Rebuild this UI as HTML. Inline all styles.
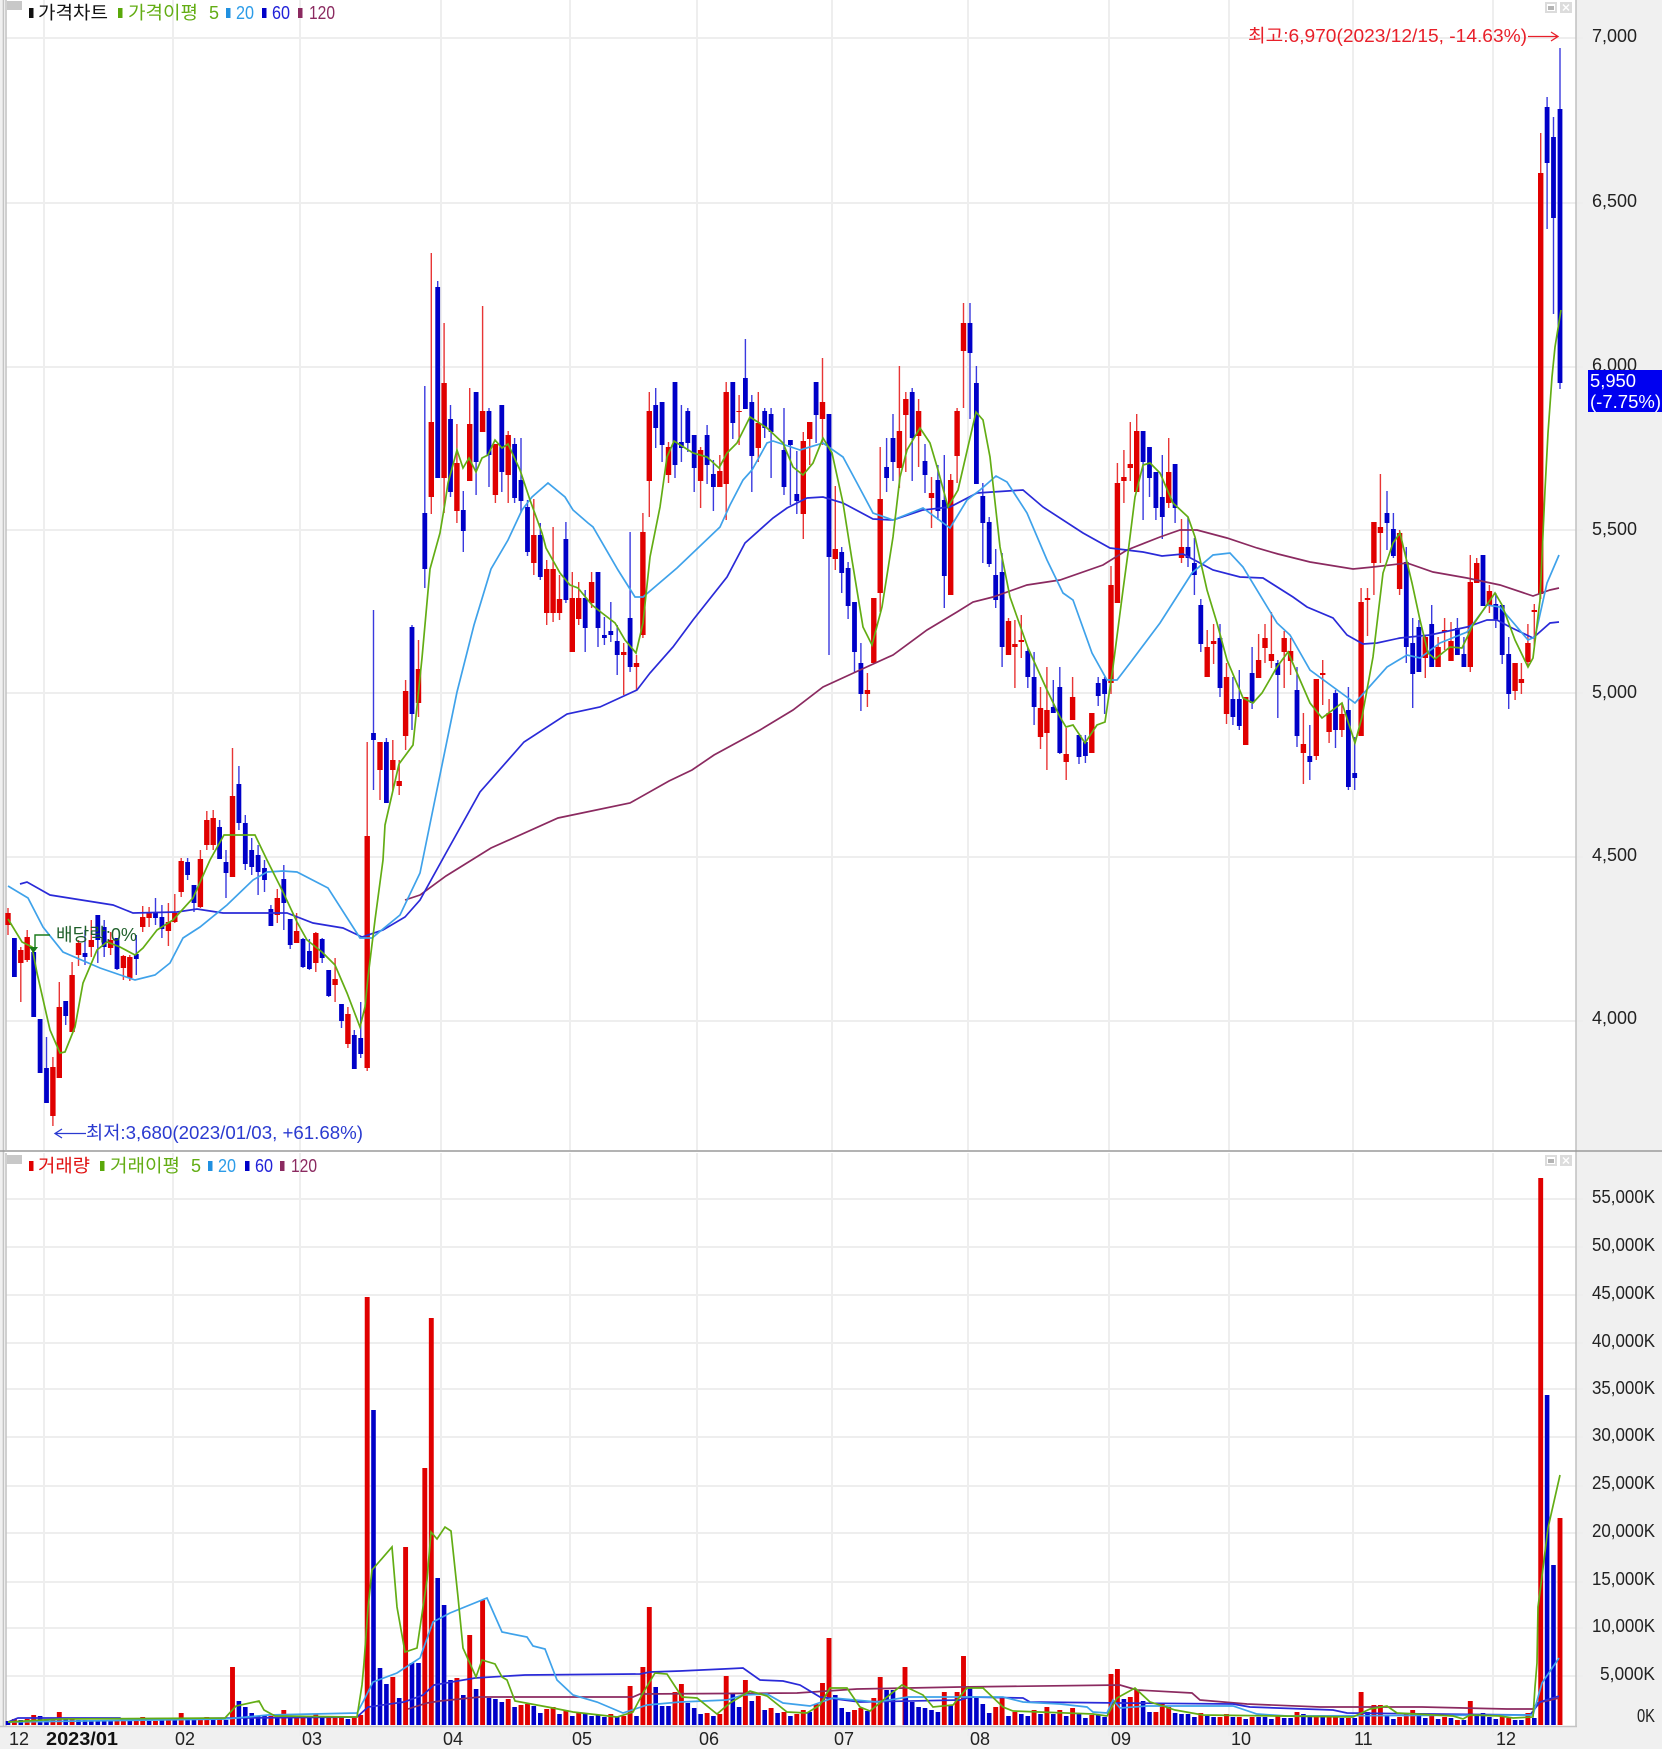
<!DOCTYPE html>
<html lang="ko">
<head>
<meta charset="utf-8">
<title>가격차트</title>
<style>
html,body{margin:0;padding:0;background:#fff;width:1662px;height:1749px;overflow:hidden}
svg{display:block}
text{font-family:"Liberation Sans","Noto Sans CJK KR",sans-serif;font-size:18px}
.ax{fill:#222}
</style>
</head>
<body>
<svg width="1662" height="1749" viewBox="0 0 1662 1749" xmlns="http://www.w3.org/2000/svg">
<rect width="1662" height="1749" fill="#fff"/>
<rect x="1576" y="0" width="86" height="1749" fill="#f0f0f0"/>
<rect x="0" y="1727" width="1662" height="22" fill="#f0f0f0"/>
<rect x="0" y="0" width="3" height="1749" fill="#f0f0f0"/>

<!-- grid -->
<path fill="none" stroke="#eeeeee" stroke-width="2" d="M6 38H1583M6 203H1583M6 367H1583M6 530H1583M6 693H1583M6 857H1583M6 1021H1583M6 1199H1583M6 1247H1583M6 1295H1583M6 1343H1583M6 1389H1583M6 1437H1583M6 1486H1583M6 1533H1583M6 1582H1583M6 1628H1583M6 1676H1583"/>
<path fill="none" stroke="#eeeeee" stroke-width="2" d="M44 0V1150M173 0V1150M300 0V1150M441 0V1150M570 0V1150M697 0V1150M832 0V1150M968 0V1150M1109 0V1150M1229 0V1150M1353 0V1150M1493 0V1150M44 1153V1736M173 1153V1736M300 1153V1736M441 1153V1736M570 1153V1736M697 1153V1736M832 1153V1736M968 1153V1736M1109 1153V1736M1229 1153V1736M1353 1153V1736M1493 1153V1736"/>
<path fill="none" stroke="#c4c4c4" stroke-width="1.6" d="M1576 0V1727M3.5 0V1727M6 0V1150M6 1153V1727M0 1726.5H1577"/>
<path fill="none" stroke="#9a9a9a" stroke-width="1.6" d="M0 1151H1662"/>

<!-- price candles: wicks -->
<path fill="none" stroke="#e83535" stroke-width="1.4" d="M8 908V935M20.8 947V1002M27.2 930V962M52.9 1057V1126M59.3 982V1078M72.1 962V1032M78.5 940V966M91.3 920V957M110.6 932V955M123.4 955V980M129.8 955V981M142.7 906V932M149.1 907V927M168.4 903V946M174.8 894V923M181.2 858V897M200.4 850V908M206.8 811V850M213.2 810V850M232.5 748V877M277.3 889V923M296.6 913V943M315.8 932V972M335.1 958V1002M347.9 1007V1048M367.2 742V1071M380 742V800M392.8 740V790M399.2 760V795M405.6 680V750M418.5 640V717M431.3 253V514M444.1 323V513M456.9 424V523M469.7 388V481M482.6 306V432M495.4 444V503M508.2 431V503M533.8 499V575M546.7 560V625M553.1 527V622M559.5 575V620M572.3 572V652M578.7 582V625M591.6 572V608M623.7 643V695M636.5 655V690M642.9 513V638M649.3 392V517M668.5 442V483M700.6 447V508M719.8 455V487M726.2 382V520M739.1 395V445M758.3 392V462M803.3 432V539M809.7 422V465M822.5 358V445M835.3 486V570M867.4 673V707M873.8 598V663M880.2 447V612M899.4 366V488M905.8 392V472M918.6 399V467M931.5 477V528M950.7 474V595M957.1 408V483M963.5 303V408M1008.5 618V655M1014.9 620V688M1021.3 615V658M1040.5 687V749M1046.9 667V770M1066.2 728V780M1072.6 677V720M1091.8 713V753M1111 566V694M1117.4 463V603M1123.9 450V503M1130.3 422V481M1136.7 414V492M1168.7 438V508M1181.5 519V563M1207.2 630V677M1213.6 624V664M1226.5 663V724M1245.7 697V745M1258.6 634V678M1265 624V663M1271.4 612V668M1284.2 631V688M1290.6 638V675M1303.4 713V784M1316.3 679V760M1322.7 660V705M1329.1 699V743M1341.9 703V737M1361.1 588V736M1367.5 588V636M1373.9 522V595M1380.4 474V563M1399.6 530V595M1425.3 635V678M1438.1 637V667M1444.6 618V650M1451 622V661M1470.3 555V672M1476.7 558V583M1489.4 585V613M1515.1 663V700M1521.4 663V694M1527.9 624V667M1534.3 604V648M1540.7 133V599"/>
<path fill="none" stroke="#3a3adf" stroke-width="1.4" d="M14.4 938V977M33.7 952V1017M40.1 1019V1073M46.5 1037V1103M65.7 1001V1025M85 930V965M97.8 915V963M104.2 920V957M117 938V970M136.3 935V975M155.5 898V925M161.9 905V938M187.6 858V880M194 885V912M219.6 820V859M226 850V898M238.9 766V830M245.3 815V870M251.7 838V875M258.1 845V895M264.5 860V892M270.9 905V926M283.8 865V930M290.2 919V949M303 938V968M309.4 939V970M322.2 938V963M328.7 970V997M341.5 1004V1028M354.3 1030V1069M360.7 1002V1058M373.5 610V790M386.4 738V803M412 625V730M424.8 386V588M437.7 281V478M450.5 405V497M463.3 491V552M476.1 392V495M489 408V487M501.8 405V492M514.6 438V503M521 438V512M527.5 500V556M540.3 523V580M565.9 522V603M585.2 590V652M598 572V647M604.4 617V645M610.8 602V642M617.2 625V675M630.1 532V672M655.7 388V448M662.1 402V462M675 382V478M681.4 405V462M687.8 408V452M694.2 435V492M707.1 425V484M713.4 460V511M732.8 382V439M745.4 339V409M751.8 395V492M764.7 408V438M771.1 408V478M784 408V495M790.4 440V505M796.8 451V514M816.1 382V443M829 414V655M841.7 547V593M848.1 562V619M854.5 602V672M860.9 643V711M886.6 438V492M893 414V481M912.2 388V481M925 444V493M937.9 465V520M944.3 455V608M970 303V419M976.4 366V484M982.8 483V563M989.2 517V567M995.7 549V608M1002.1 553V667M1027.8 648V688M1034.1 652V725M1053.3 680V713M1059.8 667V754M1079 735V764M1085.4 735V763M1098.2 677V706M1104.6 677V714M1143.1 431V520M1149.5 447V497M1155.9 472V520M1162.3 455V539M1175.1 464V523M1188 517V567M1194.4 538V595M1200.8 599V652M1220 624V697M1232.9 677V725M1239.3 670V730M1252.1 647V709M1277.8 660V718M1297 667V747M1309.8 725V780M1335.5 690V748M1348.4 687V790M1354.7 737V790M1387 491V550M1393.4 513V558M1406.3 547V663M1412.7 618V708M1418.9 620V672M1431.7 605V667M1457.4 618V655M1463.9 637V667M1483 555V606M1495.8 593V628M1502.2 605V664M1508.7 637V709M1547.1 97V229M1553.5 117V314M1560 48V389"/>
<!-- price candles: bodies -->
<path fill="none" stroke="#e00000" stroke-width="5.4" d="M8 913V925M20.8 950V963M27.2 937V960M52.9 1067V1116M59.3 1007V1078M72.1 975V1032M78.5 943V955M91.3 940V947M110.6 940V948M123.4 956V968M129.8 957V978M142.7 917V927M149.1 913V918M168.4 922V931M174.8 913V922M181.2 861V892M200.4 859V907M206.8 820V845M213.2 818V845M232.5 796V877M277.3 898V915M296.6 931V943M315.8 933V963M335.1 979V985M347.9 1014V1044M367.2 836V1068M380 742V770M392.8 760V770M399.2 781V786M405.6 691V736M418.5 669V703M431.3 422V497M444.1 383V478M456.9 463V511M469.7 424V481M482.6 411V432M495.4 444V495M508.2 435V475M533.8 535V563M546.7 569V613M553.1 569V613M559.5 599V613M572.3 598V652M578.7 598V619M591.6 582V603M623.7 652V655M636.5 663V667M642.9 532V635M649.3 411V481M668.5 447V475M700.6 450V481M719.8 471V487M726.2 392V484M739.1 411V412M758.3 423V448M803.3 441V514M809.7 422V439M822.5 402V419M835.3 549V559M867.4 690V694M873.8 598V663M880.2 499V593M899.4 431V468M905.8 399V415M918.6 411V436M931.5 493V498M950.7 480V595M957.1 411V456M963.5 323V351M1008.5 621V655M1014.9 644V647M1021.3 640V642M1040.5 708V737M1046.9 710V733M1066.2 754V762M1072.6 697V720M1091.8 713V753M1111 585V683M1117.4 483V603M1123.9 477V481M1130.3 464V468M1136.7 431V492M1168.7 472V503M1181.5 547V558M1207.2 647V677M1213.6 641V644M1226.5 677V714M1245.7 697V745M1258.6 660V678M1265 638V648M1271.4 654V661M1284.2 638V652M1290.6 651V661M1303.4 744V753M1316.3 679V756M1322.7 673V675M1329.1 713V732M1341.9 714V730M1361.1 602V736M1367.5 598V600M1373.9 522V563M1380.4 527V533M1399.6 533V589M1425.3 637V658M1438.1 647V667M1444.6 630V632M1451 641V661M1470.3 582V667M1476.7 563V583M1489.4 591V606M1515.1 663V691M1521.4 679V683M1527.9 643V662M1534.3 610V612M1540.7 173V594"/>
<path fill="none" stroke="#0000c8" stroke-width="4.8" d="M14.4 938V977M33.7 952V1017M40.1 1019V1073M46.5 1068V1103M65.7 1001V1016M85 953V957M97.8 915V940M104.2 927V947M117 938V969M136.3 954V959M155.5 912V918M161.9 917V929M187.6 862V875M194 885V903M219.6 827V859M226 862V873M238.9 784V823M245.3 823V864M251.7 850V867M258.1 855V872M264.5 868V880M270.9 909V926M283.8 879V903M290.2 919V945M303 939V967M309.4 951V969M322.2 939V958M328.7 970V996M341.5 1004V1021M354.3 1035V1069M360.7 1038V1054M373.5 733V740M386.4 742V803M412 627V714M424.8 513V569M437.7 287V478M450.5 419V492M463.3 510V531M476.1 392V462M489 411V455M501.8 405V472M514.6 444V498M521 480V501M527.5 507V552M540.3 535V577M565.9 539V600M585.2 598V628M598 572V628M604.4 635V638M610.8 631V635M617.2 641V655M630.1 618V667M655.7 405V428M662.1 402V445M675 382V465M681.4 442V448M687.8 411V443M694.2 435V468M707.1 435V465M713.4 474V487M732.8 382V423M745.4 378V409M751.8 402V456M764.7 411V428M771.1 414V432M784 450V487M790.4 440V445M796.8 494V501M816.1 382V415M829 414V557M841.7 552V573M848.1 568V606M854.5 602V652M860.9 663V694M886.6 467V478M893 438V462M912.2 392V438M925 461V475M937.9 480V511M944.3 500V576M970 323V353M976.4 383V484M982.8 496V523M989.2 522V564M995.7 575V600M1002.1 572V647M1027.8 651V677M1034.1 677V707M1053.3 707V713M1059.8 687V753M1079 735V757M1085.4 742V756M1098.2 683V696M1104.6 679V694M1143.1 431V462M1149.5 447V478M1155.9 472V508M1162.3 497V517M1175.1 464V508M1188 547V558M1194.4 563V575M1200.8 605V644M1220 638V688M1232.9 699V717M1239.3 699V726M1252.1 673V703M1277.8 663V675M1297 690V736M1309.8 756V762M1335.5 693V730M1348.4 710V787M1354.7 773V778M1387 513V523M1393.4 529V556M1406.3 562V647M1412.7 643V674M1418.9 627V672M1431.7 624V667M1457.4 628V655M1463.9 654V667M1483 555V606M1495.8 604V620M1502.2 605V655M1508.7 654V694M1547.1 107V163M1553.5 137V218M1560 109V383"/>

<!-- price MA lines -->
<polyline fill="none" stroke="#8b2a60" stroke-width="1.7" points="405,900 420,895 446,876 491,848 558,818 630,803 669,781 692,770 714,755 760,730 793,710 823,687 860,670 893,655 927,630 957,612 973,602 993,597 1027,585 1060,580 1103,565 1127,550 1160,537 1180,530 1197,530 1227,538 1257,548 1278,554 1310,562 1353,569 1373,567 1407,563 1433,572 1467,578 1500,585 1533,596 1550,590 1559,588"/>
<polyline fill="none" stroke="#2a2ad8" stroke-width="1.7" points="20,884 27,882 50,895 113,905 133,913 177,912 197,909 223,913 287,913 313,923 343,928 362,937 383,930 405,917 420,900 446,853 480,792 524,742 567,714 600,707 637,690 650,673 673,647 693,620 727,577 745,543 773,518 787,508 807,498 823,497 843,503 873,519 893,520 923,510 950,507 977,493 1023,490 1043,507 1083,533 1110,548 1143,552 1162,556 1183,554 1200,563 1213,570 1240,577 1263,578 1293,597 1307,607 1333,618 1347,635 1363,644 1377,643 1400,638 1430,635 1467,627 1487,620 1497,620 1510,627 1533,638 1550,623 1559,622"/>
<polyline fill="none" stroke="#3fa2ea" stroke-width="1.7" points="8,886 28,898 43,927 63,952 100,968 135,980 155,975 170,963 183,938 200,927 227,905 253,880 267,872 283,871 297,872 328,888 360,938 372,938 400,915 420,873 441,770 457,692 474,625 491,569 508,540 522,510 532,497 548,483 565,497 573,510 588,523 593,527 618,570 635,597 643,597 677,568 720,527 730,505 743,480 752,470 767,443 773,441 800,450 823,443 843,457 857,483 873,513 893,520 923,508 950,528 967,500 980,490 996,476 1007,482 1027,513 1047,560 1063,593 1073,600 1092,653 1107,680 1117,680 1130,663 1160,623 1192,573 1213,555 1230,553 1243,567 1277,623 1290,635 1310,670 1355,703 1387,667 1407,655 1420,658 1440,643 1467,632 1487,605 1500,607 1528,640 1535,637 1547,583 1559,555"/>
<polyline fill="none" stroke="#63ad14" stroke-width="1.7" points="8,919 22,942 32,947 37,973 50,1030 60,1053 65,1052 75,1027 83,983 97,950 107,942 120,947 135,955 143,948 157,930 173,920 193,898 210,860 224,835 255,835 267,860 283,892 297,922 307,940 322,952 335,965 347,993 360,1027 365,1007 368,977 375,920 383,860 385,825 399,764 413,745 422,658 430,569 440,533 445,503 448,483 457,450 463,468 469,458 476,472 482,458 488,455 495,440 502,448 508,444 520,470 530,500 542,533 546,548 560,573 570,585 578,588 592,605 602,613 615,623 625,640 636,653 643,623 650,557 660,507 667,457 674,441 693,453 707,457 719,468 727,453 737,443 750,417 767,428 783,443 793,467 803,475 813,463 823,438 832,453 843,503 852,560 863,627 872,645 882,607 893,537 900,477 907,450 920,428 930,443 938,470 948,507 958,490 976,412 983,420 990,457 1000,547 1010,597 1028,648 1047,690 1060,717 1066,727 1073,725 1085,743 1097,725 1105,722 1113,667 1123,590 1128,553 1135,497 1143,465 1150,463 1160,473 1173,503 1188,517 1195,537 1207,590 1217,623 1227,660 1243,698 1253,703 1262,693 1277,667 1288,652 1297,673 1310,703 1322,718 1342,703 1355,743 1362,717 1373,657 1383,573 1393,543 1400,533 1412,583 1420,620 1428,653 1435,659 1450,647 1462,648 1473,625 1495,593 1502,605 1515,640 1528,667 1533,658 1540,600 1545,490 1548,433 1552,377 1555,347 1561,310"/>

<!-- annotations -->
<path fill="none" stroke="#1a7a1a" stroke-width="1.4" d="M50 935H35V947"/>
<path fill="#1a7a1a" d="M29 947H38L33.500 953Z"/>
<text x="56" y="941" textLength="81" lengthAdjust="spacingAndGlyphs" fill="#1f5f2a">배당락:0%</text>
<text x="1248" y="42" textLength="279" lengthAdjust="spacingAndGlyphs" fill="#e8202a">최고:6,970(2023/12/15, -14.63%)</text>
<path fill="none" stroke="#e8202a" stroke-width="1.3" d="M1528 36.500H1558M1551 32L1558 36.500L1551 41"/>
<text x="86" y="1139" textLength="277" lengthAdjust="spacingAndGlyphs" fill="#2a3ad0">최저:3,680(2023/01/03, +61.68%)</text>
<path fill="none" stroke="#2a3ad0" stroke-width="1.3" d="M55 1133.500H86M62 1129L55 1133.500L62 1138"/>

<!-- volume bars -->
<path fill="none" stroke="#e00000" stroke-width="4.9" d="M14.4 1725V1719M27.2 1725V1719M33.7 1725V1715M52.9 1725V1719M59.3 1725V1712M72.1 1725V1719M117 1725V1721M123.4 1725V1721M136.3 1725V1721M142.7 1725V1717M155.5 1725V1721M168.4 1725V1720M181.2 1725V1713M200.4 1725V1719M206.8 1725V1717M219.6 1725V1719M232.5 1725V1667M270.9 1725V1716M283.8 1725V1710M296.6 1725V1717M303 1725V1717M315.8 1725V1714M328.7 1725V1717M335.1 1725V1717M341.5 1725V1717M354.3 1725V1718M360.7 1725V1715M367.2 1725V1297M392.8 1725V1677M405.6 1725V1547M424.8 1725V1468M431.3 1725V1318M456.9 1725V1678M469.7 1725V1635M482.6 1725V1600M508.2 1725V1699M521 1725V1705M527.5 1725V1704M546.7 1725V1709M553.1 1725V1707M565.9 1725V1710M578.7 1725V1713M610.8 1725V1714M623.7 1725V1716M630.1 1725V1686M642.9 1725V1667M649.3 1725V1607M675 1725V1692M681.4 1725V1684M707.1 1725V1713M719.8 1725V1714M726.2 1725V1676M745.4 1725V1680M758.3 1725V1696M771.1 1725V1708M784 1725V1712M796.8 1725V1714M803.3 1725V1710M816.1 1725V1704M822.5 1725V1683M829 1725V1638M854.5 1725V1710M860.9 1725V1708M873.8 1725V1698M880.2 1725V1677M905 1725V1667M944.3 1725V1692M957.1 1725V1692M963.5 1725V1656M995.7 1725V1707M1002.1 1725V1698M1014.9 1725V1712M1034.1 1725V1710M1046.9 1725V1707M1059.8 1725V1710M1072.6 1725V1708M1091.8 1725V1715M1111 1725V1674M1117.4 1725V1669M1130.3 1725V1697M1136.7 1725V1690M1155.9 1725V1712M1162.3 1725V1703M1168.7 1725V1707M1200.8 1725V1713M1220 1725V1717M1226.5 1725V1714M1239.3 1725V1717M1252.1 1725V1717M1277.8 1725V1716M1297 1725V1712M1316.3 1725V1717M1329.1 1725V1717M1335.5 1725V1715M1348.4 1725V1718M1361.1 1725V1692M1373.9 1725V1705M1380.4 1725V1705M1399.6 1725V1717M1406.3 1725V1713M1412.7 1725V1710M1431.7 1725V1716M1444.6 1725V1717M1457.4 1725V1720M1470.3 1725V1701M1502.2 1725V1716M1508.7 1725V1718M1527.9 1725V1713M1540.7 1725V1178M1560 1725V1518"/>
<path fill="none" stroke="#0000c8" stroke-width="4.6" d="M8 1725V1721M20.8 1725V1720M40.1 1725V1716M46.5 1725V1719M65.7 1725V1718M78.5 1725V1720M85 1725V1720M91.3 1725V1720M97.8 1725V1720M104.2 1725V1720M110.6 1725V1720M129.8 1725V1721M149.1 1725V1721M161.9 1725V1719M174.8 1725V1720M187.6 1725V1719M194 1725V1720M213.2 1725V1719M226 1725V1720M238.9 1725V1701M245.3 1725V1707M251.7 1725V1713M258.1 1725V1716M264.5 1725V1716M277.3 1725V1718M290.2 1725V1717M309.4 1725V1718M322.2 1725V1718M347.9 1725V1719M373.5 1725V1410M380 1725V1668M386.4 1725V1684M399.2 1725V1698M412 1725V1663M418.5 1725V1663M437.7 1725V1578M444.1 1725V1605M450.5 1725V1680M463.3 1725V1695M476.1 1725V1689M489 1725V1698M495.4 1725V1699M501.8 1725V1702M514.6 1725V1707M533.8 1725V1706M540.3 1725V1713M559.5 1725V1714M572.3 1725V1716M585.2 1725V1714M591.6 1725V1716M598 1725V1715M604.4 1725V1717M617.2 1725V1717M636.5 1725V1716M655.7 1725V1687M662.1 1725V1706M668.5 1725V1706M687.8 1725V1703M694.2 1725V1708M700.6 1725V1714M713.4 1725V1716M732.8 1725V1693M739.1 1725V1707M751.8 1725V1701M764.7 1725V1710M777.6 1725V1713M790.4 1725V1716M809.7 1725V1712M835.3 1725V1695M841.7 1725V1708M848.1 1725V1712M867.4 1725V1711M886.6 1725V1690M893 1725V1690M905.8 1725V1697M912.2 1725V1702M918.6 1725V1707M925 1725V1708M931.5 1725V1710M937.9 1725V1712M950.7 1725V1705M970 1725V1687M976.4 1725V1698M982.8 1725V1704M989.2 1725V1713M1008.5 1725V1716M1021.3 1725V1714M1027.8 1725V1716M1040.5 1725V1714M1053.3 1725V1714M1066.2 1725V1716M1079 1725V1714M1085.4 1725V1718M1098.2 1725V1715M1104.6 1725V1717M1123.9 1725V1699M1143.1 1725V1701M1149.5 1725V1712M1175.1 1725V1713M1181.5 1725V1714M1188 1725V1714M1194.4 1725V1717M1207.2 1725V1716M1213.6 1725V1717M1232.9 1725V1717M1245.7 1725V1719M1258.6 1725V1717M1265 1725V1717M1271.4 1725V1719M1284.2 1725V1718M1290.6 1725V1718M1303.4 1725V1714M1309.8 1725V1717M1322.7 1725V1717M1341.9 1725V1718M1354.7 1725V1718M1367.5 1725V1712M1387 1725V1716M1393.4 1725V1719M1418.9 1725V1716M1425.3 1725V1718M1438.1 1725V1719M1451 1725V1718M1463.9 1725V1720M1476.7 1725V1714M1483 1725V1713M1489.4 1725V1717M1495.8 1725V1719M1515.1 1725V1720M1521.4 1725V1720M1534.3 1725V1718M1547.1 1725V1395M1553.5 1725V1565"/>

<!-- volume MA lines -->
<polyline fill="none" stroke="#8b2a60" stroke-width="1.7" points="408,1709 427,1703 440,1701 480,1697 633,1697 640,1694 797,1693 857,1689 960,1687 1120,1685 1137,1690 1192,1693 1200,1700 1247,1704 1320,1707 1422,1707 1507,1709 1533,1709 1537,1703 1559,1698"/>
<polyline fill="none" stroke="#2a2ad8" stroke-width="1.7" points="8,1722 18,1718 120,1718 121,1719 357,1717 368,1707 404,1702 423,1695 434,1685 475,1678 525,1675 640,1674 650,1672 680,1671 723,1669 743,1668 760,1680 783,1681 800,1685 820,1697 860,1702 960,1700 970,1697 1023,1698 1030,1702 1120,1703 1233,1704 1250,1707 1333,1710 1347,1713 1530,1715 1540,1702 1559,1696"/>
<polyline fill="none" stroke="#3fa2ea" stroke-width="1.7" points="8,1722 225,1719 268,1715 357,1713 364,1700 373,1682 397,1673 420,1658 433,1622 450,1613 487,1598 502,1632 527,1637 533,1646 545,1649 557,1680 573,1695 597,1702 623,1713 647,1705 680,1702 727,1700 743,1695 767,1694 783,1703 810,1706 833,1698 877,1702 908,1697 1003,1697 1023,1702 1060,1704 1087,1707 1093,1712 1107,1713 1113,1700 1120,1708 1147,1706 1233,1706 1257,1714 1287,1716 1533,1715 1542,1683 1559,1658"/>
<polyline fill="none" stroke="#63ad14" stroke-width="1.7" points="8,1722 60,1719 225,1718 236,1706 259,1701 264,1710 275,1716 357,1717 362,1685 364,1663 368,1608 372,1570 392,1547 397,1607 405,1652 417,1648 427,1580 431,1532 437,1539 445,1527 451,1531 458,1597 463,1648 476,1677 482,1660 495,1664 502,1677 507,1680 515,1701 553,1708 573,1712 617,1717 633,1712 643,1693 655,1673 667,1674 682,1697 697,1698 717,1714 730,1703 750,1691 767,1696 787,1712 807,1713 820,1705 830,1688 847,1688 860,1707 870,1711 887,1697 902,1685 923,1695 933,1707 953,1705 967,1688 983,1688 1003,1707 1013,1711 1093,1714 1107,1716 1117,1698 1135,1688 1150,1702 1160,1705 1175,1710 1203,1715 1353,1717 1370,1709 1387,1706 1397,1713 1453,1716 1463,1719 1470,1715 1500,1716 1513,1718 1533,1717 1535,1687 1537,1663 1538,1607 1541,1584 1548,1528 1560,1475"/>

<!-- legends -->
<rect x="7" y="1" width="15" height="9" fill="#c8c8c8"/>
<rect x="29" y="8" width="4.500" height="10" fill="#111"/>
<text x="38" y="19" textLength="70" lengthAdjust="spacingAndGlyphs" fill="#111">가격차트</text>
<rect x="118" y="8" width="4.500" height="10" fill="#5aa80a"/>
<text x="128" y="19" textLength="70" lengthAdjust="spacingAndGlyphs" fill="#63ad14">가격이평</text>
<text x="209" y="19" fill="#63ad14">5</text>
<rect x="226" y="8" width="4.500" height="10" fill="#2090e0"/>
<text x="236" y="19" textLength="18" lengthAdjust="spacingAndGlyphs" fill="#2c9ce8">20</text>
<rect x="262" y="8" width="4.500" height="10" fill="#0000c8"/>
<text x="272" y="19" textLength="18" lengthAdjust="spacingAndGlyphs" fill="#2222d8">60</text>
<rect x="298" y="8" width="4.500" height="10" fill="#8b2a60"/>
<text x="309" y="19" textLength="26" lengthAdjust="spacingAndGlyphs" fill="#8b2a60">120</text>

<rect x="7" y="1155" width="15" height="9" fill="#c8c8c8"/>
<rect x="29" y="1161" width="4.500" height="10" fill="#e00000"/>
<text x="38" y="1172" textLength="52" lengthAdjust="spacingAndGlyphs" fill="#e01010">거래량</text>
<rect x="100" y="1161" width="4.500" height="10" fill="#5aa80a"/>
<text x="110" y="1172" textLength="70" lengthAdjust="spacingAndGlyphs" fill="#63ad14">거래이평</text>
<text x="191" y="1172" fill="#63ad14">5</text>
<rect x="208" y="1161" width="4.500" height="10" fill="#2090e0"/>
<text x="218" y="1172" textLength="18" lengthAdjust="spacingAndGlyphs" fill="#2c9ce8">20</text>
<rect x="245" y="1161" width="4.500" height="10" fill="#0000c8"/>
<text x="255" y="1172" textLength="18" lengthAdjust="spacingAndGlyphs" fill="#2222d8">60</text>
<rect x="280" y="1161" width="4.500" height="10" fill="#8b2a60"/>
<text x="291" y="1172" textLength="26" lengthAdjust="spacingAndGlyphs" fill="#8b2a60">120</text>

<!-- window buttons -->
<g fill="#dcdcdc">
<rect x="1545" y="2" width="12" height="11"/><rect x="1560" y="2" width="12" height="11"/>
<rect x="1545" y="1155" width="12" height="11"/><rect x="1560" y="1155" width="12" height="11"/>
</g>
<g fill="#fff"><rect x="1547" y="4" width="8" height="7"/><rect x="1547" y="1157" width="8" height="7"/></g>
<g fill="#b4b4b4"><rect x="1548" y="6" width="6" height="4"/><rect x="1548" y="1159" width="6" height="4"/></g>
<path fill="none" stroke="#fff" stroke-width="1.500" d="M1563 4.500L1569 10.500M1569 4.500L1563 10.500M1563 1157.500L1569 1163.500M1569 1157.500L1563 1163.500"/>

<!-- price axis -->
<g class="ax">
<text x="1592" y="42">7,000</text>
<text x="1592" y="207">6,500</text>
<text x="1592" y="371">6,000</text>
<text x="1592" y="535">5,500</text>
<text x="1592" y="698">5,000</text>
<text x="1592" y="861">4,500</text>
<text x="1592" y="1024">4,000</text>
</g>
<rect x="1588" y="370" width="74" height="42" fill="#0000f0"/>
<text x="1590" y="387" textLength="46" lengthAdjust="spacingAndGlyphs" fill="#fff">5,950</text>
<text x="1590" y="408" textLength="71" lengthAdjust="spacingAndGlyphs" fill="#fff">(-7.75%)</text>

<!-- volume axis -->
<g class="ax">
<text x="1592" y="1203" textLength="63" lengthAdjust="spacingAndGlyphs">55,000K</text>
<text x="1592" y="1251" textLength="63" lengthAdjust="spacingAndGlyphs">50,000K</text>
<text x="1592" y="1299" textLength="63" lengthAdjust="spacingAndGlyphs">45,000K</text>
<text x="1592" y="1347" textLength="63" lengthAdjust="spacingAndGlyphs">40,000K</text>
<text x="1592" y="1394" textLength="63" lengthAdjust="spacingAndGlyphs">35,000K</text>
<text x="1592" y="1441" textLength="63" lengthAdjust="spacingAndGlyphs">30,000K</text>
<text x="1592" y="1489" textLength="63" lengthAdjust="spacingAndGlyphs">25,000K</text>
<text x="1592" y="1537" textLength="63" lengthAdjust="spacingAndGlyphs">20,000K</text>
<text x="1592" y="1585" textLength="63" lengthAdjust="spacingAndGlyphs">15,000K</text>
<text x="1592" y="1632" textLength="63" lengthAdjust="spacingAndGlyphs">10,000K</text>
<text x="1600" y="1680" textLength="55" lengthAdjust="spacingAndGlyphs">5,000K</text>
<text x="1637" y="1722" textLength="18" lengthAdjust="spacingAndGlyphs">0K</text>
</g>

<!-- date axis -->
<g class="ax">
<text x="9" y="1745">12</text>
<text x="46" y="1745" textLength="72" lengthAdjust="spacingAndGlyphs" font-weight="bold" fill="#111">2023/01</text>
<text x="175" y="1745">02</text>
<text x="302" y="1745">03</text>
<text x="443" y="1745">04</text>
<text x="572" y="1745">05</text>
<text x="699" y="1745">06</text>
<text x="834" y="1745">07</text>
<text x="970" y="1745">08</text>
<text x="1111" y="1745">09</text>
<text x="1231" y="1745">10</text>
<text x="1354" y="1745">11</text>
<text x="1496" y="1745">12</text>
</g>
</svg>
</body>
</html>
